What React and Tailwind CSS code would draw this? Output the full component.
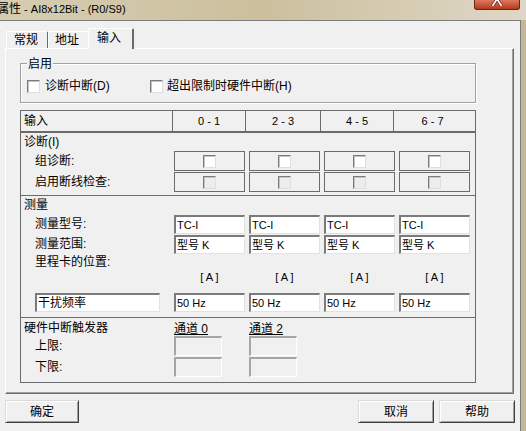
import React from 'react'

const channels = ['0 - 1', '2 - 3', '4 - 5', '6 - 7']

function Check({ dim }) {
  return (
    <span
      className={`block w-[13px] h-[13px] border border-t-[#7b7b7b] border-l-[#7b7b7b] border-r-[#dedede] border-b-[#dedede] shadow-[inset_1px_1px_0_#c4c4c4] ${dim ? 'bg-[#ededed]' : 'bg-white'}`}
    />
  )
}

function Field({ children, wide }) {
  return (
    <div
      className={`h-[19px] ${wide ? 'w-[125px]' : 'w-[71px]'} bg-white border-t-2 border-l-2 border-r border-b border-t-[#7a7a7a] border-l-[#7a7a7a] border-r-[#e2e2e2] border-b-[#e2e2e2] pl-[1px] flex items-center text-[11px] leading-[13px] whitespace-nowrap overflow-hidden`}
    >
      {children}
    </div>
  )
}

function DimBox() {
  return (
    <div className="h-[20px] w-[48px] bg-[#f0f0f0] border-t-2 border-l-2 border-r border-b border-t-[#a6a6a6] border-l-[#a6a6a6] border-r-white border-b-white" />
  )
}

function Label({ children, indent }) {
  return (
    <div className={`w-[153px] shrink-0 flex items-center text-[12px] leading-[15px] ${indent ? 'pl-[14px]' : 'pl-[3px]'}`}>
      {children}
    </div>
  )
}

function CheckRow({ label, dim, className = '' }) {
  return (
    <div className={`flex h-[20px] ${className}`}>
      <Label indent>{label}</Label>
      <div className="flex gap-[4px]">
        {channels.map((c) => (
          <div key={c} className="w-[71px] h-[20px] border border-[#6b6b6b] flex items-center justify-center">
            <Check dim={dim} />
          </div>
        ))}
      </div>
    </div>
  )
}

function FieldRow({ label, values, className = '' }) {
  return (
    <div className={`flex h-[19px] ${className}`}>
      <Label indent>{label}</Label>
      <div className="flex gap-[4px]">
        {values.map((v, i) => (
          <Field key={i}>{v}</Field>
        ))}
      </div>
    </div>
  )
}

function Btn({ children, className = '' }) {
  return (
    <button
      className={`h-[23px] flex items-center justify-center text-[12px] bg-[#f0f0f0] border border-t-[#dadada] border-l-[#dadada] border-r-[#404040] border-b-[#404040] shadow-[inset_1px_1px_0_#ffffff,inset_-1px_-1px_0_#a0a0a0] ${className}`}
    >
      {children}
    </button>
  )
}

export default function App() {
  return (
    <div className="w-[526px] h-[431px] overflow-hidden flex flex-col bg-[#c6b996] text-black font-['Liberation_Sans','Noto_Sans_CJK_SC',sans-serif]">
      {/* title bar */}
      <div className="h-[20px] shrink-0 flex items-start bg-linear-to-r from-[#d7cdb2] via-[#cbbf9d] to-[#dfd8c6]">
        <span className="ml-[-3px] leading-[15px] whitespace-nowrap">
          <span className="text-[12px]">属性</span>
          <span className="text-[11px]"> - AI8x12Bit - (R0/S9)</span>
        </span>
        <div className="ml-auto mr-[6px] w-[46px] h-[10px] bg-linear-to-b from-[#dc7a5e] to-[#b5381e] border border-t-0 border-[#6e2414] rounded-b-[3px] flex justify-center">
          <svg width="12" height="6" viewBox="0 0 12 6">
            <path d="M1.5 6 L6 -1 L10.5 6" fill="none" stroke="#5a2010" strokeWidth="3.2" />
            <path d="M1.5 6 L6 -1 L10.5 6" fill="none" stroke="#ffffff" strokeWidth="1.8" />
          </svg>
        </div>
      </div>

      <div className="flex flex-1">
        <div className="w-[521px] bg-[#f0f0f0] border-t border-r border-[#7c7c7c] flex flex-col">
          {/* tabs */}
          <div className="pt-[7px] pl-[6px] flex items-end h-[27px] text-[12px] leading-[15px]">
            <div className="w-[42px] h-[17px] pl-[7px] flex items-center border-t border-l border-white border-r border-r-[#6a6a6a] rounded-tl-[2px] rounded-tr-[2px]">
              常规
            </div>
            <div className="w-[42px] h-[17px] pl-[6px] flex items-center border-t border-l border-white border-r border-r-[#6a6a6a] rounded-tl-[2px] rounded-tr-[2px]">
              地址
            </div>
            <div className="relative z-10 ml-[-2px] mb-[-1px] w-[46px] h-[21px] pl-[8px] pt-[2px] bg-[#f0f0f0] border-t border-l border-white border-r-2 border-r-[#6a6a6a] rounded-tl-[2px] rounded-tr-[2px]">
              输入
            </div>
          </div>

          {/* panel */}
          <div className="ml-[5px] w-[509px] h-[346px] border-t border-l border-white border-r border-b border-r-[#6e6e6e] border-b-[#6e6e6e] shadow-[inset_-1px_-1px_0_#a0a0a0] pl-[14px] pt-[14px]">
            {/* enable group */}
            <div className="relative w-[456px] h-[40px] border border-[#a0a0a0] shadow-[1px_1px_0_#ffffff,inset_1px_1px_0_#ffffff] pl-[6px] pt-[16px] flex items-start text-[12px] leading-[13px]">
              <span className="absolute left-[6px] top-[-8px] px-[1px] bg-[#f0f0f0] leading-[16px]">启用</span>
              <div className="w-[123px] flex items-center gap-[5px]">
                <Check />
                <span>诊断中断(D)</span>
              </div>
              <div className="flex items-center gap-[4px]">
                <Check />
                <span>超出限制时硬件中断(H)</span>
              </div>
            </div>

            {/* table */}
            <div className="mt-[7px] w-[456px] border border-[#6b6b6b]">
              <div className="grid grid-cols-[152px_73px_75px_73px_77px] h-[22px] border-b-2 border-[#6b6b6b]">
                <div className="border-r border-[#6b6b6b] pl-[3px] flex items-center text-[12px]">输入</div>
                {channels.map((c, i) => (
                  <div
                    key={c}
                    className={`flex items-center justify-center text-[11px] ${i < 3 ? 'border-r border-[#6b6b6b]' : ''}`}
                  >
                    {c}
                  </div>
                ))}
              </div>

              {/* diagnostics */}
              <div className="h-[63px] border-b border-[#6b6b6b] flex flex-col">
                <div className="h-[18px] flex">
                  <Label>诊断(I)</Label>
                </div>
                <CheckRow label="组诊断:" />
                <CheckRow label="启用断线检查:" dim className="mt-[1px]" />
              </div>

              {/* measurement */}
              <div className="h-[122px] border-b border-[#6b6b6b] flex flex-col">
                <div className="h-[19px] flex">
                  <Label>测量</Label>
                </div>
                <FieldRow label="测量型号:" values={['TC-I', 'TC-I', 'TC-I', 'TC-I']} />
                <FieldRow label="测量范围:" values={['型号 K', '型号 K', '型号 K', '型号 K']} className="mt-[1px]" />
                <div className="h-[17px] flex">
                  <Label indent>里程卡的位置:</Label>
                </div>
                <div className="h-[12px] flex">
                  <div className="w-[153px] shrink-0" />
                  <div className="flex gap-[4px]">
                    {channels.map((c) => (
                      <div key={c} className="w-[71px] text-center text-[11px] leading-[12px]">
                        [ A ]
                      </div>
                    ))}
                  </div>
                </div>
                <div className="mt-[10px] flex h-[19px]">
                  <div className="w-[153px] shrink-0 pl-[14px]">
                    <Field wide>
                      <span className="text-[12px]">干扰频率</span>
                    </Field>
                  </div>
                  <div className="flex gap-[4px]">
                    {channels.map((c) => (
                      <Field key={c}>50 Hz</Field>
                    ))}
                  </div>
                </div>
              </div>

              {/* hardware interrupt */}
              <div className="h-[64px] flex flex-col">
                <div className="h-[18px] flex items-end">
                  <div className="w-[153px] shrink-0 pl-[3px] text-[12px] leading-[16px]">硬件中断触发器</div>
                  <div className="flex gap-[4px] text-[12px] leading-[14px]">
                    <span className="w-[71px] underline underline-offset-[1px]">通道 0</span>
                    <span className="w-[71px] underline underline-offset-[1px]">通道 2</span>
                  </div>
                </div>
                <div className="flex h-[20px]">
                  <Label indent>上限:</Label>
                  <div className="flex gap-[27px]">
                    <DimBox />
                    <DimBox />
                  </div>
                </div>
                <div className="flex h-[20px] mt-[1px]">
                  <Label indent>下限:</Label>
                  <div className="flex gap-[27px]">
                    <DimBox />
                    <DimBox />
                  </div>
                </div>
              </div>
            </div>
          </div>

          {/* buttons */}
          <div className="mt-[6px] flex pl-[5px] pr-[5px]">
            <Btn className="w-[74px]">确定</Btn>
            <Btn className="ml-auto w-[76px]">取消</Btn>
            <Btn className="ml-[5px] w-[76px]">帮助</Btn>
          </div>
        </div>
        <div className="flex-1 bg-[#c4b794]" />
      </div>
    </div>
  )
}
